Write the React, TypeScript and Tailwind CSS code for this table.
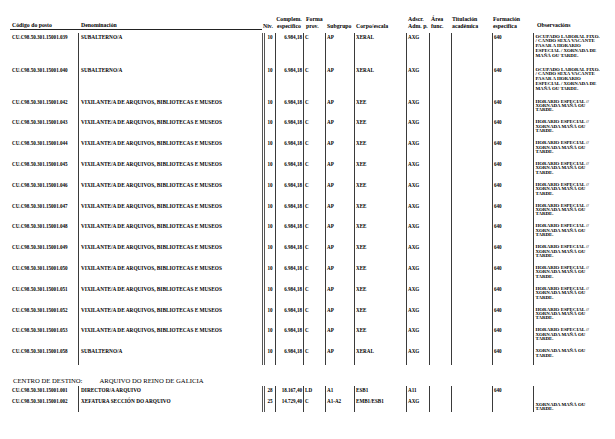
import React from 'react'

type Row = {
  code: string
  denom: string
  niv: string
  imp: string
  forma: string
  sub: string
  corpo: string
  adscr: string
  form: string
  obs: string[]
  h: string
  lead: string
}

const OBS_LONG = ['OCUPADO LABORAL FIXO.', '/ CANDO SEXA VACANTE', 'PASAR A HORARIO', 'ESPECIAL / XORNADA DE', 'MAÑÁ OU TARDE.']
const OBS_VIX = ['HORARIO ESPECIAL //', 'XORNADA MAÑÁ OU', 'TARDE.']
const OBS_SHORT = ['XORNADA MAÑÁ OU', 'TARDE.']

const base = { niv: '10', imp: '6.984,18', forma: 'C', sub: 'AP', adscr: 'AXG', form: '640' }

const vixCodes = ['042', '043', '044', '045', '046', '047', '048', '049', '050', '051', '052', '053']

const section1: Row[] = [
  { ...base, code: 'CU.C98.50.301.15001.039', denom: 'SUBALTERNO/A', corpo: 'XERAL', obs: OBS_LONG, h: 'h-[33px]', lead: 'leading-[4.75px]' },
  { ...base, code: 'CU.C98.50.301.15001.040', denom: 'SUBALTERNO/A', corpo: 'XERAL', obs: OBS_LONG, h: 'h-[32px]', lead: 'leading-[4.75px]' },
  ...vixCodes.map((c) => ({
    ...base,
    code: `CU.C98.50.301.15001.${c}`,
    denom: 'VIXILANTE/A DE ARQUIVOS, BIBLIOTECAS E MUSEOS',
    corpo: 'XEE',
    obs: OBS_VIX,
    h: 'h-[20.8px]',
    lead: 'leading-[4.4px]',
  })),
  { ...base, code: 'CU.C98.50.301.15001.058', denom: 'SUBALTERNO/A', corpo: 'XERAL', obs: OBS_SHORT, h: 'h-[17.4px]', lead: 'leading-[4.4px]' },
]

const section2: Row[] = [
  { code: 'CU.C98.50.301.15001.001', denom: 'DIRECTOR/A ARQUIVO', niv: '28', imp: '18.167,40', forma: 'LD', sub: 'A1', corpo: 'ESB1', adscr: 'A11', form: '640', obs: [], h: 'h-[11px]', lead: 'leading-[4.4px]' },
  { code: 'CU.C98.50.301.15001.002', denom: 'XEFATURA SECCIÓN DO ARQUIVO', niv: '25', imp: '14.729,40', forma: 'C', sub: 'A1-A2', corpo: 'EMB1/ESB1', adscr: 'AXG', form: '', obs: ['', ...OBS_SHORT], h: 'h-[15px]', lead: 'leading-[4.4px]' },
]

const cols = 'grid grid-cols-[66px_184px_13px_28px_22px_29px_52px_23px_22px_41px_41px_72px]'
const line = 'border-l border-[#3a3a3a]'
const cell = 'pt-[1.6px] whitespace-nowrap overflow-visible'

function DataRow({ r }: { r: Row }) {
  return (
    <div className={`${cols} ${r.h} text-[5.1px] leading-[4.8px]`}>
      <div className={cell}>{r.code}</div>
      <div className={`${cell} ${line} pl-[2px] text-[5.3px]`}>{r.denom}</div>
      <div className={`${cell} border-l-[3px] border-double border-[#555] text-center`}>{r.niv}</div>
      <div className={`${cell} ${line} text-right pr-[1px]`}>{r.imp}</div>
      <div className={`${cell} ${line} pl-[1px]`}>{r.forma}</div>
      <div className={`${cell} ${line} pl-[1px]`}>{r.sub}</div>
      <div className={`${cell} ${line} pl-[1px]`}>{r.corpo}</div>
      <div className={`${cell} ${line} pl-[1px]`}>{r.adscr}</div>
      <div className={`${cell} ${line}`} />
      <div className={`${cell} ${line}`} />
      <div className={`${cell} ${line} pl-[1px]`}>{r.form}</div>
      <div className={`${cell} ${line} pl-[1.5px] text-[4.9px] ${r.lead}`}>
        {r.obs.map((o, i) => (
          <div key={i} className="min-h-[4.4px]">{o}</div>
        ))}
      </div>
    </div>
  )
}

function Head({ a, b, cls = '' }: { a?: string; b: string; cls?: string }) {
  return (
    <div className={`flex flex-col justify-end whitespace-nowrap ${cls}`}>
      {a && <div>{a}</div>}
      <div>{b}</div>
    </div>
  )
}

export default function App() {
  return (
    <div
      className="w-[615px] h-[439px] bg-white text-black overflow-hidden pt-[15.5px] pl-[12px] font-bold"
      style={{ fontFamily: '"Liberation Serif", "Times New Roman", serif' }}
    >
      <div className={`${cols} h-[14px] text-[5.8px] leading-[7px]`}>
        <div className="col-span-2 flex items-end border-b border-[#222] -ml-[2px] pl-[2px]">
          <div className="w-[69px]">Código do posto</div>
          <div>Denominación</div>
        </div>
        <Head b="Niv." cls="pl-[1px]" />
        <Head a="Complem." b="específico" cls="items-center" />
        <Head a="Forma" b="prov." cls="pl-[3px]" />
        <Head b="Subgrupo" cls="pl-[2px]" />
        <Head b="Corpo/escala" cls="pl-[2px]" />
        <Head a="Adscr." b="Adm. p." cls="pl-[2px]" />
        <Head a="Área" b="func." cls="pl-[2px]" />
        <Head a="Titulación" b="académica" cls="pl-[1px]" />
        <Head a="Formación" b="específica" cls="pl-[1px]" />
        <Head b="Observacións" cls="pl-[4px] pb-[0.5px]" />
      </div>

      <div className="mt-[3.5px]">
        {section1.map((r) => (
          <DataRow key={r.code} r={r} />
        ))}
      </div>

      <div className="mt-[12px] h-[9px] flex items-center gap-[17px] text-[6.7px] font-normal leading-[8px] pl-[1px]">
        <span>CENTRO DE DESTINO:</span>
        <span>ARQUIVO DO REINO DE GALICIA</span>
      </div>

      <div>
        {section2.map((r) => (
          <DataRow key={r.code} r={r} />
        ))}
      </div>
    </div>
  )
}
